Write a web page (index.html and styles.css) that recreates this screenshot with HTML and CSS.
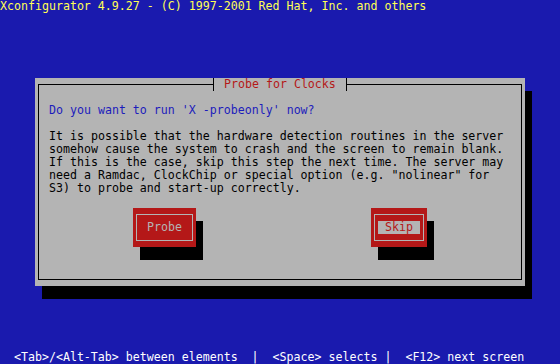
FILE: index.html
```html
<!DOCTYPE html>
<html lang="en">
<head>
  <meta charset="UTF-8" />
  <title>Xconfigurator - Probe for Clocks</title>
  <link rel="stylesheet" href="styles.css">
</head>
<body>

<div class="topbar">Xconfigurator 4.9.27 - (C) 1997-2001 Red Hat, Inc. and others</div>

<div class="window">
  <div class="title">Probe for Clocks</div>
  <div class="frame">
    <div class="prompt">Do you want to run 'X -probeonly' now?</div>
    <div class="text">It is possible that the hardware detection routines in the server
somehow cause the system to crash and the screen to remain blank.
If this is the case, skip this step the next time. The server may
need a Ramdac, ClockChip or special option (e.g. "nolinear" for
S3) to probe and start-up correctly.</div>

    <div class="buttons">
      <div class="button probe">
        <div class="button-inner"><span class="button-label">Probe</span></div>
      </div>
      <div class="button skip">
        <div class="button-inner"><span class="button-label"> Skip </span></div>
      </div>
    </div>
  </div>
</div>

<div class="helpline">  &lt;Tab&gt;/&lt;Alt-Tab&gt; between elements  |  &lt;Space&gt; selects |  &lt;F12&gt; next screen</div>

</body>
</html>
```

FILE: styles.css
```css
body {
  margin: 0;
  width: 560px;
  height: 364px;
  overflow: hidden;
  background-color: #1a1aae;
  font-family: 'DejaVu Sans Mono', monospace;
  font-size: 11.627px;
  line-height: 13px;
  display: flex;
  flex-direction: column;
}

.topbar {
  height: 13px;
  color: #ffff54;
  white-space: pre;
}

/* dialog window, one cell = 7x13 */
.window {
  position: relative;
  margin: 65px 0 0 35px;
  width: 490px;
  height: 208px;
  box-sizing: border-box;
  padding: 6px 3px;
  background-color: #b4b4b4;
  box-shadow: 7px 13px 0 #000;
}

.frame {
  height: 100%;
  box-sizing: border-box;
  border: 1px solid #000;
  padding: 19px 0 0 10px;
}

.title {
  position: absolute;
  top: 0;
  left: 178px;
  width: 134px;
  height: 13px;
  box-sizing: border-box;
  padding-left: 10px;
  border-left: 1px solid #000;
  border-right: 1px solid #000;
  background-color: #b4b4b4;
  color: #b41818;
  white-space: pre;
}

.prompt {
  height: 13px;
  color: #1c1cbc;
  white-space: pre;
}

.text {
  margin-top: 13px;
  color: #000;
  white-space: pre;
}

.buttons {
  display: flex;
  margin-top: 13px;
  padding-left: 84px;
}

.button {
  width: 63px;
  height: 39px;
  box-sizing: border-box;
  padding: 6px 3px;
  background-color: #b41818;
  box-shadow: 7px 13px 0 #000;
}

.button.skip {
  width: 56px;
  margin-left: 175px;
}

.button-inner {
  height: 100%;
  box-sizing: border-box;
  border: 1px solid #b4b4b4;
  padding-top: 6px;
  display: flex;
  justify-content: center;
  align-items: flex-start;
}

.button-label {
  height: 13px;
  color: #b4b4b4;
  white-space: pre;
}

.skip .button-label {
  background-color: #b4b4b4;
  color: #b41818;
}

.helpline {
  margin-top: auto;
  height: 13px;
  color: #fff;
  white-space: pre;
}
```
